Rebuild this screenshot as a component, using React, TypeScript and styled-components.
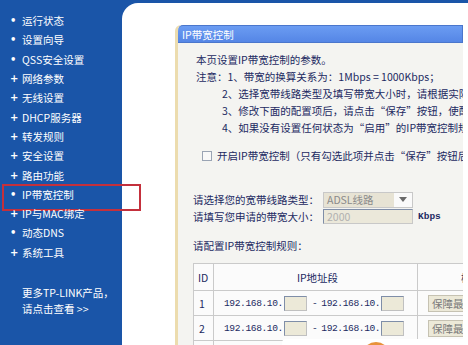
import styled, { createGlobalStyle } from "styled-components";

const GlobalStyle = createGlobalStyle`
  html, body {
    margin: 0;
    padding: 0;
    background: #ffffff;
  }
  * { box-sizing: border-box; }
`;

const menu = [
  { label: "运行状态", expandable: false },
  { label: "设置向导", expandable: false },
  { label: "QSS安全设置", expandable: false },
  { label: "网络参数", expandable: true },
  { label: "无线设置", expandable: true },
  { label: "DHCP服务器", expandable: true },
  { label: "转发规则", expandable: true },
  { label: "安全设置", expandable: true },
  { label: "路由功能", expandable: true },
  { label: "IP带宽控制", expandable: false, active: true },
  { label: "IP与MAC绑定", expandable: true },
  { label: "动态DNS", expandable: false },
  { label: "系统工具", expandable: true },
];

const notes = [
  "2、选择宽带线路类型及填写带宽大小时，请根据实际情况进行选择和填写",
  "3、修改下面的配置项后，请点击“保存”按钮，使配置生效",
  "4、如果没有设置任何状态为“启用”的IP带宽控制规则，则",
];

const App = () => {
  return (
    <>
      <GlobalStyle />
      <Page>
        <Sidebar>
          <MenuList>
            {menu.map((item) => (
              <MenuItem key={item.label} $active={item.active}>
                <Bullet>{item.expandable ? "+" : "•"}</Bullet>
                {item.label}
              </MenuItem>
            ))}
          </MenuList>
          <MoreLink>
            <div>更多TP-LINK产品，</div>
            <div>请点击查看 &gt;&gt;</div>
          </MoreLink>
        </Sidebar>

        <Main>
          <Panel>
            <PanelHeader>IP带宽控制</PanelHeader>
            <PanelBody>
              <Line>本页设置IP带宽控制的参数。</Line>
              <Line>注意：1、带宽的换算关系为：1Mbps = 1000Kbps；</Line>
              {notes.map((n) => (
                <NoteLine key={n}>{n}</NoteLine>
              ))}

              <CheckRow>
                <CheckBox />
                开启IP带宽控制（只有勾选此项并点击“保存”按钮后，以下设置才能生效）
              </CheckRow>

              <FormRows>
                <FieldRow>
                  <FieldLabel>请选择您的宽带线路类型：</FieldLabel>
                  <Select>
                    <SelectValue>ADSL线路</SelectValue>
                    <SelectArrow>
                      <svg width="8" height="5" viewBox="0 0 8 5">
                        <path d="M0 0 L8 0 L4 5 Z" fill="#6a6a6a" />
                      </svg>
                    </SelectArrow>
                  </Select>
                </FieldRow>
                <FieldRow>
                  <FieldLabel>请填写您申请的带宽大小：</FieldLabel>
                  <TextBox>2000</TextBox>
                  <Unit>Kbps</Unit>
                </FieldRow>
              </FormRows>

              <SectionTitle>请配置IP带宽控制规则：</SectionTitle>

              <RuleTable>
                <colgroup>
                  <col style={{ width: 20 }} />
                  <col style={{ width: 204 }} />
                  <col />
                </colgroup>
                <thead>
                  <tr>
                    <HeadCell>ID</HeadCell>
                    <HeadCell $center>IP地址段</HeadCell>
                    <HeadCell $indent={43}>模式</HeadCell>
                  </tr>
                </thead>
                <tbody>
                  {[1, 2, 3].map((id) => (
                    <tr key={id}>
                      <IdCell>{id}</IdCell>
                      <BodyCell>
                        <IpRange>
                          192.168.10.<IpBox />
                          <Dash>-</Dash>
                          192.168.10.<IpBox />
                        </IpRange>
                      </BodyCell>
                      <BodyCell>
                        <ModeButton>保障最小带宽</ModeButton>
                      </BodyCell>
                    </tr>
                  ))}
                </tbody>
              </RuleTable>
            </PanelBody>
          </Panel>
          <Watermark>
            <WatermarkDot />
          </Watermark>
        </Main>
      </Page>
    </>
  );
};

const Page = styled.div`
  display: flex;
  width: 468px;
  height: 345px;
  overflow: hidden;
  background: #1a55a8;
  font-family: "Noto Sans CJK SC", "DejaVu Sans", sans-serif;
  font-size: 10.5px;
`;

const Sidebar = styled.div`
  width: 122px;
  flex-shrink: 0;
  padding-top: 11px;
  color: #ffffff;
`;

const MenuList = styled.ul`
  list-style: none;
  margin: 0;
  padding: 0;
`;

const MenuItem = styled.li<{ $active?: boolean }>`
  position: relative;
  display: flex;
  align-items: center;
  height: 19.3px;
  padding-left: 10px;
  white-space: nowrap;
  z-index: 2;

  &::after {
    content: "";
    display: ${(p) => (p.$active ? "block" : "none")};
    position: absolute;
    left: 2px;
    top: -1px;
    width: 135px;
    height: 23px;
    border: 2px solid #c4303c;
  }
`;

const Bullet = styled.span`
  display: inline-block;
  width: 12px;
  font-size: 10px;
  font-family: "DejaVu Sans", sans-serif;
  font-weight: bold;
`;

const MoreLink = styled.div`
  margin-top: 23px;
  padding-left: 22px;
  line-height: 16px;
  white-space: nowrap;
`;

const Main = styled.div`
  position: relative;
  flex: 1;
  margin-top: 3px;
  background: #ffffff;
  border-top-left-radius: 16px;
  padding: 22px 0 0 53px;
  overflow: hidden;
`;

const Panel = styled.div`
  width: 288px;
  height: 400px;
  background: #f4f4f1;
  border-left: 3px solid #ecdcae;
  border-top-left-radius: 6px;
  color: #1c2a62;
  overflow: hidden;
`;

const PanelHeader = styled.div`
  height: 18px;
  line-height: 18px;
  padding-left: 4px;
  color: #ffffff;
  background: linear-gradient(#6b9cf2, #5586e6);
  border: 1px solid #4a76cc;
  border-left: none;
  border-top-left-radius: 5px;
  white-space: nowrap;
`;

const PanelBody = styled.div`
  padding: 8px 0 0 15px;
`;

const Line = styled.div`
  height: 17px;
  line-height: 17px;
  padding-left: 3px;
  white-space: nowrap;
  overflow: hidden;
`;

const NoteLine = styled(Line)`
  padding-left: 29px;
`;

const CheckRow = styled.div`
  display: flex;
  align-items: center;
  margin-top: 11px;
  height: 17px;
  padding-left: 9px;
  white-space: nowrap;
  overflow: hidden;
`;

const CheckBox = styled.span`
  width: 10px;
  height: 10px;
  margin-right: 5px;
  flex-shrink: 0;
  border: 1px solid #9aa4b4;
  background: #f8f8f8;
`;

const FormRows = styled.div`
  margin-top: 27px;
`;

const FieldRow = styled.div`
  display: flex;
  align-items: center;
  height: 17px;
  white-space: nowrap;
`;

const FieldLabel = styled.span`
  width: 130px;
  flex-shrink: 0;
`;

const Select = styled.div`
  display: flex;
  align-items: center;
  width: 90px;
  height: 16px;
  border: 1px solid #c8c8c8;
  background: #fafafa;
`;

const SelectValue = styled.span`
  width: 70px;
  height: 100%;
  padding-left: 3px;
  line-height: 14px;
  background: #e7e3d4;
  color: #8a8a8a;
`;

const SelectArrow = styled.span`
  flex: 1;
  display: flex;
  justify-content: center;
`;

const TextBox = styled.span`
  width: 90px;
  height: 15px;
  line-height: 13px;
  padding-left: 3px;
  border: 1px solid #7f8ea8;
  border-right-color: #c8c8c8;
  border-bottom-color: #c8c8c8;
  background: #ebe8da;
  color: #b0b0b0;
`;

const Unit = styled.span`
  margin-left: 5px;
  font-family: "Liberation Mono", "DejaVu Sans Mono", monospace;
  font-weight: bold;
  font-size: 9.5px;
`;

const SectionTitle = styled.div`
  margin-top: 12px;
  height: 17px;
  line-height: 17px;
  white-space: nowrap;
`;

const RuleTable = styled.table`
  margin-top: 9px;
  width: 271px;
  table-layout: fixed;
  border-collapse: collapse;
  background: #fbfbfb;
  color: #1c2a62;
`;

const HeadCell = styled.th<{ $center?: boolean; $indent?: number }>`
  height: 27px;
  padding: 0 0 0 ${(p) => p.$indent ?? 4}px;
  font-weight: normal;
  text-align: ${(p) => (p.$center ? "center" : "left")};
  border: 1px solid #cacaca;
  white-space: nowrap;
  overflow: hidden;
`;

const IdCell = styled.td`
  height: 25px;
  padding: 0 0 0 5px;
  border: 1px solid #cacaca;
`;

const BodyCell = styled.td`
  height: 25px;
  padding: 0 0 0 10px;
  border: 1px solid #cacaca;
  white-space: nowrap;
  overflow: hidden;
`;

const IpRange = styled.div`
  display: flex;
  align-items: center;
  font-family: "Liberation Mono", "DejaVu Sans Mono", monospace;
  font-size: 9.6px;
  letter-spacing: -0.4px;
`;

const IpBox = styled.span`
  width: 23px;
  height: 15px;
  margin-left: 1px;
  border: 1px solid #7f8ea8;
  border-right-color: #c0c0c0;
  border-bottom-color: #c0c0c0;
  background: #ece9d8;
`;

const Dash = styled.span`
  margin: 0 4px 0 5px;
`;

const ModeButton = styled.span`
  display: inline-block;
  height: 17px;
  line-height: 15px;
  padding: 0 3px;
  border: 1px solid #c6c2b2;
  background: #ece9d8;
  color: #7a7a7a;
  white-space: nowrap;
`;

const Watermark = styled.div`
  position: absolute;
  left: 160px;
  top: 336px;
  width: 200px;
  height: 30px;
  background: #ffffff;
  border-top-left-radius: 4px;
`;

const WatermarkDot = styled.div`
  position: absolute;
  left: 80px;
  top: 3px;
  width: 28px;
  height: 28px;
  border-radius: 50%;
  background: #e8923a;
`;

export default App;
